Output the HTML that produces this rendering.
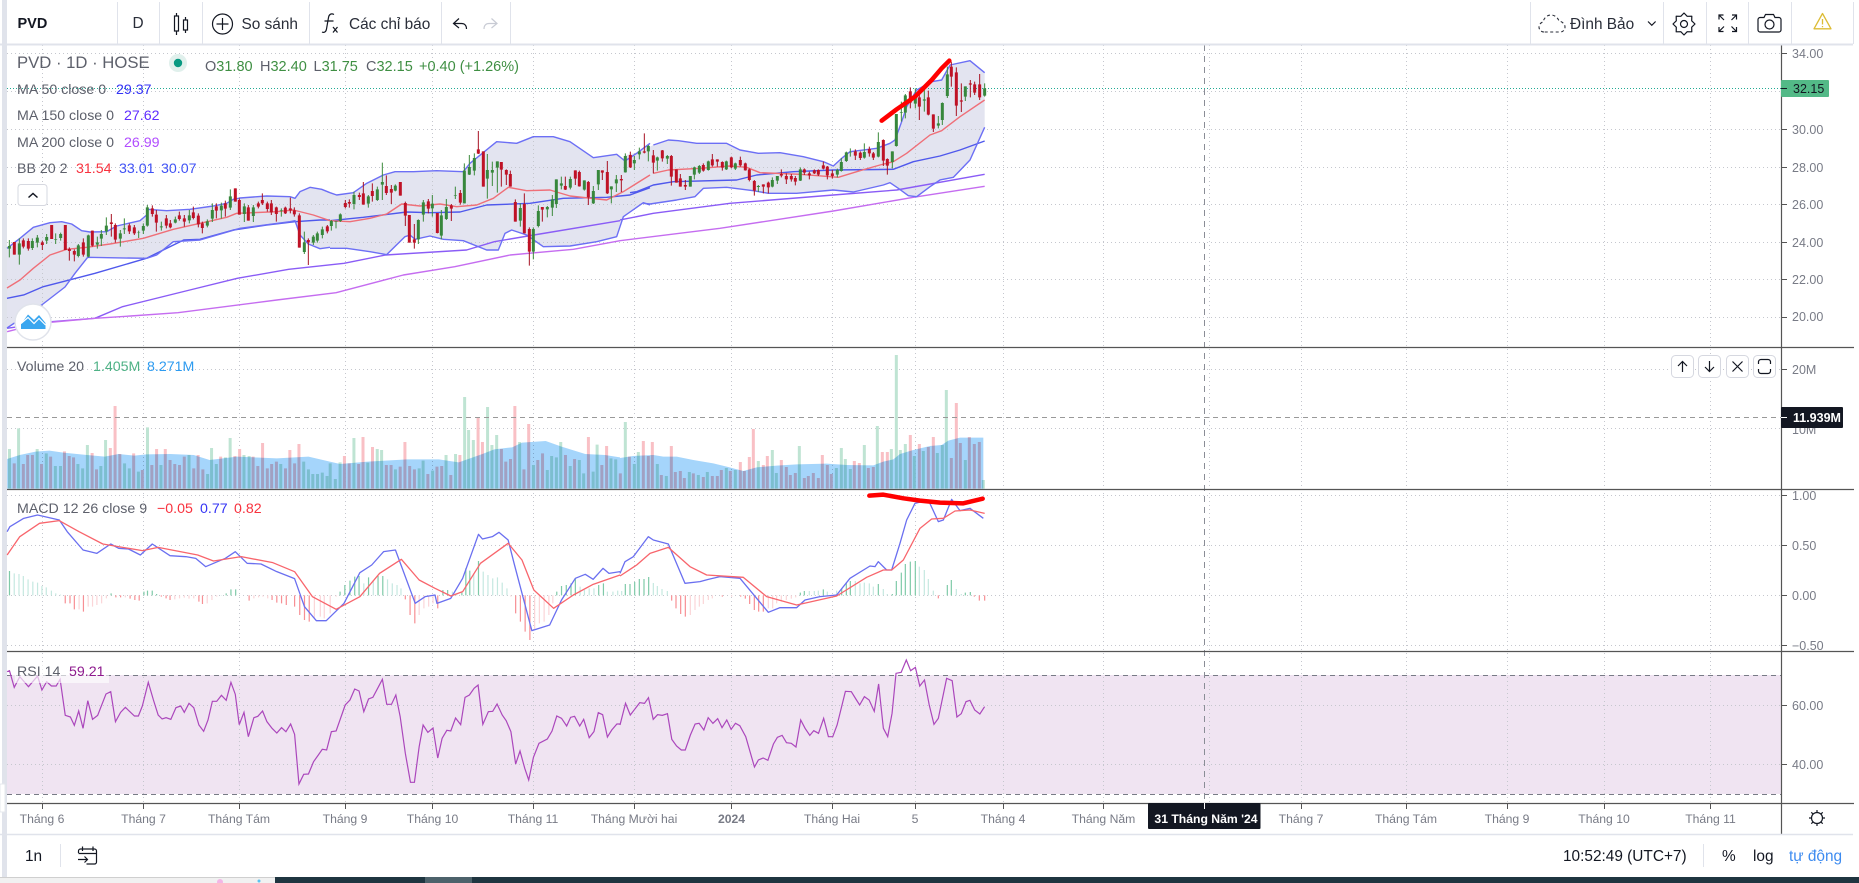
<!DOCTYPE html>
<html lang="vi"><head><meta charset="utf-8"><title>PVD</title>
<style>
html,body{margin:0;padding:0;background:#fff;width:1859px;height:883px;overflow:hidden}
svg{display:block}
svg *{vector-effect:non-scaling-stroke}
text{font-family:"Liberation Sans",sans-serif}
.n{fill:none}
.ax{font-size:12.5px;fill:#787b86}
.tm{font-size:12.2px;fill:#787b86;text-anchor:middle}
.lg{font-size:14.2px;fill:#5d606b}
.tb{font-size:15.4px;fill:#2a2e39}
.ic{fill:none;stroke:#131722;stroke-width:1.2}
.gw{fill:none;stroke:#3c8a3c;stroke-width:1}
.gb{fill:none;stroke:#37873c;stroke-width:3}
.rw{fill:none;stroke:#a81224;stroke-width:1}
.rb{fill:none;stroke:#bf1226;stroke-width:3}
.sh{fill:#e3e4f0;stroke:none}
.bd{fill:none;stroke:#6c6ff5;stroke-width:1.4;stroke-linejoin:round}
.mid{fill:none;stroke:#ef6f78;stroke-width:1.4;stroke-linejoin:round}
.m50{fill:none;stroke:#4f58ec;stroke-width:1.4;stroke-linejoin:round}
.m150{fill:none;stroke:#8a5cf6;stroke-width:1.4;stroke-linejoin:round}
.m200{fill:none;stroke:#c56df0;stroke-width:1.4;stroke-linejoin:round}
.btn{fill:#fff;stroke:#d6d8e0;stroke-width:1}
</style></head><body>
<svg width="1859" height="883" viewBox="0 0 1859 883" xmlns="http://www.w3.org/2000/svg">
<rect width="1859" height="883" fill="#fff"/>
<rect x="2" y="0" width="5" height="877" fill="#e0e3eb"/>

<!-- RSI band -->
<rect x="7" y="675" width="1774" height="119" fill="#f0e4f2"/>

<!-- Bollinger fill -->
<g transform="translate(0 170) scale(.33333)">
<polygon class="sh" points="21,235 60,205 100,172 150,158 185,155 215,162 245,182 270,186 320,185 350,168 385,160 420,152 440,135 442,118 500,122 570,118 640,108 680,100 700,88 720,84 800,78 870,80 885,85 900,65 930,52 965,58 990,68 990,232 960,236 925,222 900,195 885,152 870,155 720,175 600,210 520,215 470,255 440,265 263,262 225,310 195,351 125,405 21,474"/>
</g>
<g transform="translate(330 120) scale(.33333)">
<polygon class="sh" points="0,218 20,225 70,218 110,190 160,165 195,155 250,155 320,152 400,155 420,130 500,65 560,70 610,50 670,50 720,65 790,113 860,103 885,123 920,100 960,70 960,255 940,248 880,290 860,350 800,365 720,378 640,380 590,345 545,330 525,340 505,390 470,390 400,362 340,358 300,348 255,358 240,345 225,350 170,404 120,395 50,385 0,385"/>
</g>
<g transform="translate(620 40) scale(.33333)">
<polygon class="sh" points="0,363 20,345 60,335 100,315 145,300 175,302 230,310 320,310 360,330 415,340 480,338 550,350 610,365 640,378 665,355 690,335 770,325 810,310 825,300 845,245 860,200 890,150 935,125 965,120 990,75 1050,62 1094,98 1094,262 1050,360 1000,412 960,420 930,440 890,470 865,467 835,445 810,428 790,435 700,456 640,450 530,460 445,460 400,452 320,442 250,445 225,470 170,480 90,492 70,490 30,505 0,550"/>
</g>

<!-- grid -->
<path fill="none" stroke="#c5c7ce" stroke-width="1" stroke-dasharray="1 3" d="M42.5 45V803M143.5 45V803M239.5 45V803M345.5 45V803M432.5 45V803M533.5 45V803M634.5 45V803M731.5 45V803M832.5 45V803M915.5 45V803M1003.5 45V803M1103.5 45V803M1209.5 45V803M1301.5 45V803M1406.5 45V803M1507.5 45V803M1604.5 45V803M1710.5 45V803"/>
<path fill="none" stroke="#c5c7ce" stroke-width="1" stroke-dasharray="1 3" d="M7 53.5H1781M7 91.5H1781M7 129.5H1781M7 167.5H1781M7 204.5H1781M7 242.5H1781M7 279.5H1781M7 317.5H1781M7 369.5H1781M7 428.5H1781M7 495.5H1781M7 545.5H1781M7 595.5H1781M7 645.5H1781M7 705.5H1781M7 764.5H1781"/>

<!-- price line -->
<path d="M7 88.5H1781" stroke="#22ab94" stroke-width="1" stroke-dasharray="1 2" fill="none"/>

<!-- MAs -->
<g transform="translate(0 130) scale(.39544 .33333)">
<polyline class="m150" points="18,595 130,575 240,565 310,530 480,480 600,445 730,418 870,400 975,375 1180,360 1250,335 1350,315 1568,272"/>
<polyline class="m200" points="18,605 100,580 240,565 330,558 450,548 700,510 850,488 1020,435 1150,410 1290,375 1450,358 1568,332"/>
</g>
<g transform="translate(0 170) scale(.33333)">
<polyline class="m50" points="21,385 71,375 130,350 200,332 285,310 439,265 551,210 600,208 700,180 800,165 885,155 960,150 990,150"/>
</g>
<g transform="translate(330 120) scale(.33333)">
<polyline class="m50" points="0,302 100,292 230,276 300,278 390,276 470,255 600,250 700,235 830,232 900,225 960,203"/>
</g>
<g transform="translate(620 40) scale(.33333)">
<polyline class="m150" points="0,540 100,520 330,490 640,465 830,450 1094,403"/>
<polyline class="m200" points="0,602 300,565 640,513 880,472 1094,439"/>
<polyline class="m50" points="30,458 50,455 100,435 160,425 350,420 410,405 520,395 640,390 820,388 880,365 960,348 1020,330 1094,303"/>
</g>

<!-- bands + candles left -->
<g transform="translate(0 170) scale(.33333)">
<polyline class="bd" points="21,235 60,205 100,172 150,158 185,155 215,162 245,182 270,186 320,185 350,168 385,160 420,152 440,135 442,118 500,122 570,118 640,108 680,100 700,88 720,84 800,78 870,80 885,85 900,65 930,52 965,58 990,68"/>
<polyline class="bd" points="21,474 125,405 195,351 225,310 263,262 440,265 470,255 520,215 600,210 720,175 870,155 885,152 900,195 925,222 960,236 990,232"/>
<polyline class="mid" points="21,354 60,330 100,295 150,255 200,238 260,232 330,222 430,205 520,178 600,160 680,142 710,130 760,128 830,125 880,120 940,135 990,152"/>
<path class="gw" d="M28 210V262M58 205V284M97 205V240M112 195V232M140 192V222M167 190V222M182 188V212M235 222V262M265 194V262M292 200V236M304 180V228M319 142V195M361 180V230M373 145V192M416 182V204M430 160V192M442 105V170M484 155V182M526 140V160M568 120V160M622 148V172M637 100V156M664 98V146M691 58V120M733 100V156M760 105V156M844 115V140M913 185V252M940 195V225M952 185V218M967 170V205"/>
<path class="gb" d="M28 228V236M58 220V254M97 213V234M112 203V218M140 201V212M167 207V209M182 192V204M235 226V258M265 196V260M292 217V224M304 192V206M319 167V184M361 190V206M373 175V178M416 188V189M430 168V182M442 112V167M484 169V172M526 148V158M568 136V151M622 154V167M637 120V146M664 107V121M691 79V113M733 109V132M760 112V138M844 121V123M913 217V246M940 200V218M952 190V212M967 178V195"/>
<path class="rw" d="M43 216V254M70 205V235M85 205V242M127 212V240M155 165V207M196 165V240M208 232V272M223 238V274M250 205V260M277 182V230M334 132V200M346 160V218M388 160V192M403 165V195M457 106V140M469 120V185M499 135V175M511 150V175M538 125V152M553 135V170M580 110V148M595 130V172M607 155V190M649 100V145M676 92V140M706 55V95M718 85V134M745 105V152M775 95V115M787 70V105M802 95V125M814 90V135M829 110V155M856 110V132M871 83V130M883 112V140M898 130V233M925 205V285M982 165V190"/>
<path class="rb" d="M43 216V254M70 211V230M85 213V236M127 217V225M155 165V207M196 165V240M208 237V243M223 243V254M250 217V254M277 182V227M334 157V162M346 165V209M388 166V184M403 172V190M457 115V132M469 134V158M499 145V167M511 160V172M538 136V147M553 145V155M580 127V144M595 137V163M607 160V174M649 109V122M676 100V116M706 55V95M718 90V134M745 112V152M775 100V110M787 90V100M802 100V117M814 100V127M829 112V132M856 113V130M871 115V121M883 121V133M898 136V233M925 210V217M982 169V184"/>
</g>

<!-- bands + candles middle -->
<g transform="translate(330 120) scale(.33333)">
<polyline class="bd" points="0,218 20,225 70,218 110,190 160,165 195,155 250,155 320,152 400,155 420,130 500,65 560,70 610,50 670,50 720,65 790,113 860,103 885,123 920,100 960,70"/>
<polyline class="bd" points="0,385 50,385 120,395 170,404 225,350 240,345 255,358 300,348 340,358 400,362 470,390 505,390 525,340 545,330 590,345 640,380 720,378 800,365 860,350 880,290 940,248 960,255"/>
<polyline class="mid" points="0,302 60,305 120,295 170,282 215,252 270,258 330,252 380,260 440,255 490,235 535,202 590,212 660,210 720,228 830,240 880,215 960,165"/>
<path class="gw" d="M4 300V332M18 304V325M31 280V306M72 215V268M115 225V263M142 200V243M157 128V240M196 193V214M265 298V372M280 240V305M307 225V290M334 270V358M349 237V300M376 200V237M403 130V250M418 105V165M433 100V166M472 102V236M487 125V198M502 124V218M571 250V320M610 322V418M625 256V322M652 258V292M667 225V288M679 178V264M694 170V208M721 170V208M763 181V212M790 198V252M805 150V210M844 199V250M859 165V216M886 100V158M913 108V150M928 83V118M955 75V124"/>
<path class="gb" d="M4 303V318M18 304V306M31 283V303M72 225V252M115 229V251M142 208V240M157 186V194M196 197V212M265 300V358M280 247V284M307 251V265M334 286V347M349 261V297M376 225V227M403 152V250M418 141V164M433 114V152M472 150V176M487 150V158M502 124V143M571 264V302M610 327V395M625 273V318M652 261V268M667 238V263M679 178V252M694 190V197M721 177V203M763 181V209M790 213V250M805 150V193M844 199V208M859 178V190M886 108V157M913 120V130M928 94V103M955 78V94"/>
<path class="rw" d="M46 240V265M58 238V263M88 218V240M100 186V254M127 190V245M169 166V225M184 195V252M211 186V227M226 245V318M238 285V368M253 312V386M295 237V280M322 279V340M364 252V303M391 210V254M445 33V102M460 94V200M514 126V200M529 148V195M541 152V200M556 238V305M583 220V340M598 322V437M637 261V305M706 170V210M736 151V195M748 152V200M775 183V255M817 151V180M832 123V222M874 165V216M901 95V144M943 40V100"/>
<path class="rb" d="M46 249V261M58 246V251M88 225V231M100 220V254M127 213V228M169 198V219M184 207V218M211 186V227M226 249V287M238 285V368M253 358V368M295 244V266M322 279V339M364 256V266M391 219V248M445 88V101M460 94V200M514 126V149M529 150V164M541 162V200M556 246V305M583 252V340M598 327V395M637 261V269M706 198V209M736 151V176M748 156V199M775 186V232M817 151V158M832 156V220M874 177V181M901 105V142M943 94V98"/>
</g>

<!-- bands + candles right -->
<g transform="translate(620 40) scale(.33333)">
<polyline class="bd" points="100,315 145,300 175,302 230,310 320,310 360,330 415,340 480,338 550,350 610,365 640,378 665,355 690,335 770,325 810,310 825,300 845,245 860,200 890,150 935,125 965,120 990,75 1050,62 1094,98"/>
<polyline class="bd" points="70,490 90,492 170,480 225,470 250,445 320,442 400,452 445,460 530,460 640,450 700,456 790,435 810,428 835,445 865,467 890,470 930,440 960,420 1000,412 1050,360 1094,262"/>
<polyline class="mid" points="100,400 145,390 240,385 330,378 380,382 420,398 540,403 655,412 720,392 780,375 820,365 860,340 930,285 965,272 1020,230 1094,180"/>
<path class="gw" d="M112 350V392M142 345V372M211 408V440M223 380V418M238 375V402M265 362V392M319 362V390M346 368V390M415 435V456M457 412V442M472 408V432M541 382V423M652 386V412M664 354V395M679 335V366M691 325V350M733 310V356M775 277V352M817 334V385M829 222V320M844 185V245M856 162V235M886 145V205M913 145V215M955 228V265M967 187V255M982 80V174M1036 139V183M1094 130V170"/>
<path class="gb" d="M112 352V362M142 348V356M211 408V440M223 382V404M238 378V398M265 364V390M319 364V388M346 370V386M415 438V441M457 420V440M472 408V422M541 388V422M652 390V404M664 366V393M679 337V363M691 337V338M733 336V353M775 306V350M817 334V366M829 222V318M844 216V218M856 166V218M886 170V191M913 178V182M955 250V257M967 189V240M982 103V168M1036 139V170M1094 145V167"/>
<path class="rw" d="M100 330V400M127 330V365M154 345V437M169 388V428M181 402V440M196 420V450M250 370V395M277 342V380M292 358V380M307 364V392M334 350V385M361 350V380M376 368V392M388 385V424M403 420V467M430 433V460M445 425V460M484 388V412M499 400V432M514 402V425M526 408V436M553 385V405M568 395V418M583 388V402M595 388V408M610 365V388M622 378V418M637 390V416M706 328V360M721 334V360M748 320V350M760 336V360M790 298V378M802 355V404M871 142V205M898 160V240M925 152V226M940 223V276M994 65V140M1009 82V228M1024 130V216M1051 120V172M1064 125V165M1079 102V180"/>
<path class="rb" d="M100 346V368M127 331V355M154 348V410M169 388V428M181 415V440M196 435V440M250 375V392M277 358V376M292 358V365M307 366V383M334 352V382M361 360V376M376 370V391M388 388V420M403 423V452M430 433V440M445 428V442M484 402V407M499 408V418M514 408V418M526 414V425M553 388V398M568 400V406M583 391V400M595 390V404M610 376V386M622 380V406M637 400V408M706 334V347M721 338V354M748 327V340M760 340V353M790 300V362M802 357V377M871 154V188M898 172V200M925 172V224M940 223V266M994 80V110M1009 97V197M1024 181V185M1051 130V134M1064 133V158M1079 133V172"/>
<polyline fill="none" stroke="#f00" stroke-width="4.5" stroke-linecap="round" stroke-linejoin="round" points="785,242 830,208 885,170 935,120 965,85 988,62"/>
</g>

<!-- Volume bars left -->
<g transform="translate(0 340) scale(.39544 .33333)">
<path fill="none" stroke="#bfe4d3" stroke-width="3" d="M24 446V327M47 446V265M94 446V327M117 446V340M140 446V378M153 446V378M197 446V372M209 446V385M221 446V315M255 446V378M267 446V300M315 446V370M327 446V385M350 446V395M373 446V262M407 446V375M478 446V345M525 446V402M535 446V324M547 446V372M570 446V352M582 446V294M617 446V345M630 446V348M710 446V372M768 446V365M780 446V388M791 446V402M803 446V402M815 446V398M827 446V408M835 446V370M848 446V417M860 446V367M895 446V294M930 446V368M954 446V327M965 446V330M1000 446V388M1060 446V385M1070 446V362M1094 446V392M1128 446V345M1152 446V342M1175 446V171M1185 446V270M1197 446V300M1233 446V201M1244 446V315M1256 446V285M1314 446V306M1349 446V375M1384 446V390M1395 446V348M1407 446V352M1418 446V306M1442 446V378M1465 446V360M1476 446V400M1500 446V395M1510 446V314M1545 446V355M1557 446V358"/>
<path fill="none" stroke="#f9c0c5" stroke-width="3" d="M36 446V370M59 446V372M70 446V345M82 446V345M105 446V372M128 446V350M163 446V334M175 446V348M186 446V352M233 446V339M244 446V388M279 446V324M291 446V198M303 446V342M338 446V340M360 446V390M384 446V375M396 446V327M418 446V327M430 446V360M442 446V372M454 446V375M466 446V350M490 446V385M501 446V345M513 446V388M558 446V350M594 446V348M606 446V327M640 446V350M652 446V378M664 446V309M676 446V385M687 446V372M699 446V365M722 446V385M733 446V330M745 446V370M756 446V312M871 446V348M883 446V370M907 446V372M918 446V291M942 446V321M977 446V375M989 446V375M1012 446V380M1024 446V306M1036 446V378M1048 446V388M1082 446V402M1105 446V380M1117 446V378M1140 446V405M1163 446V345M1209 446V232M1220 446V306M1268 446V327M1279 446V365M1291 446V357M1302 446V198M1325 446V388M1337 446V252M1360 446V360M1372 446V340M1430 446V345M1453 446V357M1488 446V291M1522 446V375M1534 446V318"/>
</g>
<g transform="translate(620 340) scale(.33333)">
<path fill="none" stroke="#bfe4d3" stroke-width="3" d="M16 446V246M43 446V372M55 446V336M112 446V372M139 446V408M208 446V396M235 446V405M262 446V396M319 446V384M346 446V390M415 446V363M457 446V330M469 446V399M538 446V318M649 446V384M664 446V324M676 446V357M691 446V387M733 446V315M772 446V258M814 446V327M829 446V45M841 446V330M856 446V312M883 446V348M910 446V333M952 446V339M967 446V315M979 446V150M1036 446V360M1090 446V420"/>
<path fill="none" stroke="#f9c0c5" stroke-width="3" d="M1 446V400M28 446V350M70 446V303M85 446V348M97 446V306M124 446V405M154 446V318M166 446V396M181 446V393M193 446V414M220 446V400M250 446V411M277 446V408M292 446V408M304 446V390M331 446V393M361 446V366M373 446V393M388 446V351M400 446V267M430 446V375M442 446V348M484 446V360M499 446V381M511 446V405M526 446V399M553 446V414M565 446V408M580 446V399M595 446V414M607 446V345M622 446V375M634 446V402M703 446V363M718 446V369M745 446V384M760 446V381M787 446V336M802 446V336M871 446V285M898 446V312M925 446V321M940 446V291M994 446V354M1009 446V189M1021 446V309M1048 446V291M1063 446V312M1078 446V306"/>
</g>
<!-- Volume MA area -->
<g style="mix-blend-mode:multiply">
<g transform="translate(0 340) scale(.39544 .33333)">
<polygon fill="#a5d5fb" stroke="none" points="18,357 50,345 90,335 125,332 160,338 220,345 265,350 300,342 340,347 370,343 430,342 490,345 530,360 600,350 700,355 780,350 860,372 930,365 1030,358 1110,358 1160,367 1220,342 1250,328 1295,322 1320,308 1380,303 1420,320 1480,342 1530,345 1568,352 1568,446 18,446"/>
</g>
<g transform="translate(620 340) scale(.33333)">
<polygon fill="#a5d5fb" stroke="none" points="0,354 40,348 100,345 130,350 170,350 220,360 280,370 320,380 370,393 410,382 470,377 530,373 620,371 680,375 760,376 790,365 820,358 840,342 880,330 930,318 965,315 985,302 1020,293 1090,293 1090,446 0,446"/>
</g>
</g>
<path d="M7 417.5H1781" fill="none" stroke="#999" stroke-width="1" stroke-dasharray="5 4"/>

<!-- MACD left -->
<g transform="translate(0 340) scale(.39544 .33333)">
<path fill="none" stroke="#7fcaa8" stroke-width="1.2" d="M24 766V693M281 766V760M364 766V755M373 766V752M385 766V752M396 766V762M572 766V760M584 766V748M596 766V748M860 766V755M872 766V735M885 766V722M897 766V710M908 766V708M932 766V712M956 766V708M968 766V708M1120 766V750M1132 766V750M1168 766V758M1178 766V685M1188 766V692M1210 766V663M1408 766V755M1420 766V738M1432 766V735M1444 766V730M1455 766V715M1514 766V735M1526 766V730"/>
<path fill="none" stroke="#c5e8e0" stroke-width="1.2" d="M36 766V700M48 766V702M59 766V708M71 766V718M83 766V725M95 766V728M106 766V738M117 766V742M130 766V752M141 766V760M153 766V764M560 766V765M920 766V730M944 766V720M980 766V718M992 766V730M1004 766V735M1014 766V745M1144 766V755M1155 766V762M1198 766V700M1222 766V695M1234 766V705M1246 766V715M1258 766V712M1270 766V728M1282 766V745M1467 766V740M1478 766V750M1490 766V745M1502 766V745M1536 766V755M1550 766V755M1562 766V752"/>
<path fill="none" stroke="#f78f94" stroke-width="1.2" d="M165 766V790M177 766V790M188 766V808M211 766V815M293 766V772M305 766V772M329 766V776M341 766V780M352 766V782M408 766V770M420 766V775M430 766V780M503 766V785M512 766V792M630 766V782M688 766V780M700 766V788M712 766V790M724 766V795M745 766V800M758 766V825M770 766V840M782 766V845M1025 766V778M1037 766V825M1049 766V850M1107 766V805M1304 766V820M1316 766V845M1328 766V875M1340 766V900"/>
<path fill="none" stroke="#fbd5d8" stroke-width="1.2" d="M200 766V808M223 766V800M234 766V800M245 766V795M257 766V790M269 766V775M317 766V772M442 766V778M454 766V775M466 766V773M478 766V776M490 766V775M524 766V790M536 766V780M548 766V770M642 766V775M654 766V772M665 766V770M677 766V775M795 766V835M810 766V830M820 766V835M835 766V820M850 766V770M1060 766V825M1072 766V805M1084 766V800M1095 766V790M1292 766V770M1352 766V870M1364 766V850M1376 766V845M1388 766V825M1398 766V790"/>
<polyline fill="none" stroke="#6a6ff0" stroke-width="1.3" stroke-linejoin="round" points="18,575 25,560 60,535 95,525 150,540 170,575 210,630 245,640 280,612 300,625 325,627 355,645 385,612 430,647 470,650 495,655 520,680 570,655 595,635 625,670 660,672 700,695 745,716 770,800 800,842 825,842 870,790 910,698 940,675 970,635 1000,630 1050,790 1075,770 1100,765 1105,790 1140,775 1170,715 1210,583 1220,597 1245,590 1262,577 1285,600 1300,670 1345,872 1390,855 1420,780 1455,715 1480,703 1500,718 1525,685 1540,700 1568,695"/>
<polyline fill="none" stroke="#f8656c" stroke-width="1.3" stroke-linejoin="round" points="18,645 50,590 100,550 150,542 200,575 260,612 360,632 400,622 500,645 540,663 610,650 690,668 745,695 790,770 850,808 910,770 960,700 1015,658 1060,720 1100,745 1140,768 1170,755 1215,670 1285,610 1320,660 1350,750 1400,805 1450,765 1500,733 1568,705"/>
</g>
<!-- MACD right -->
<g transform="translate(620 340) scale(.33333)">
<path fill="none" stroke="#7fcaa8" stroke-width="1.2" d="M16 766V732M30 766V732M44 766V726M58 766V717M72 766V717M86 766V711M541 766V758M553 766V753M610 766V748M665 766V745M679 766V728M691 766V723M775 766V732M817 766V762M829 766V723M844 766V698M856 766V672M871 766V665M886 766V663M982 766V735M994 766V720M1036 766V758M1051 766V756"/>
<path fill="none" stroke="#c5e8e0" stroke-width="1.2" d="M5 766V753M100 766V729M112 766V738M126 766V747M142 766V753M568 766V753M583 766V753M595 766V752M622 766V755M650 766V752M706 766V723M720 766V730M733 766V728M748 766V730M760 766V740M790 766V747M802 766V762M898 766V680M913 766V690M925 766V717M940 766V752M1009 766V747M1024 766V762"/>
<path fill="none" stroke="#f78f94" stroke-width="1.2" d="M155 766V782M168 766V805M182 766V822M196 766V830M307 766V770M362 766V770M376 766V776M389 766V792M403 766V810M416 766V815M430 766V815M955 766V775M1063 766V770M1078 766V782M1094 766V782"/>
<path fill="none" stroke="#fbd5d8" stroke-width="1.2" d="M211 766V825M225 766V810M238 766V800M250 766V792M265 766V780M277 766V775M335 766V770M445 766V805M458 766V805M470 766V790M484 766V785M499 766V780M514 766V776M527 766V772"/>
<polyline fill="none" stroke="#6a6ff0" stroke-width="1.3" stroke-linejoin="round" points="0,700 15,665 40,650 85,590 100,600 145,612 195,730 240,725 265,718 300,710 360,715 385,745 445,817 480,803 530,803 555,780 600,770 650,765 690,715 750,678 765,680 775,665 800,690 815,690 840,610 860,540 885,490 925,480 955,545 970,540 995,478 1020,512 1050,505 1090,535"/>
<polyline fill="none" stroke="#f8656c" stroke-width="1.3" stroke-linejoin="round" points="0,708 50,675 90,640 145,622 210,680 260,705 370,712 440,770 530,795 650,768 740,712 790,690 815,690 850,660 900,565 935,537 970,535 1005,513 1050,510 1094,520"/>
<polyline fill="none" stroke="#f00" stroke-width="4.5" stroke-linecap="round" stroke-linejoin="round" points="748,467 790,464 850,475 900,482 960,488 1030,490 1088,476"/>
</g>

<!-- RSI -->
<path d="M7 675.5H1781M7 794.5H1781" fill="none" stroke="#787b86" stroke-width="1" stroke-dasharray="5 4"/>
<g transform="translate(0 640) scale(.39544 .33333)">
<polyline fill="none" stroke="#ab47bc" stroke-width="1.2" points="18,95 24,92 36,142 50,110 72,140 95,108 106,150 118,125 130,138 142,138 152,118 165,226 178,231 188,256 199,213 210,265 222,182 234,238 247,226 268,162 280,155 292,245 305,217 317,202 340,228 350,228 360,198 375,127 388,180 400,225 410,237 420,233 432,238 445,203 457,198 466,217 478,190 490,203 503,255 515,274 526,240 537,184 548,184 560,166 572,181 584,127 595,163 605,254 617,217 628,290 642,233 652,229 664,213 675,245 688,265 700,279 712,263 723,275 735,252 745,283 756,432 768,403 780,402 793,365 805,345 815,328 826,330 838,275 850,273 873,195 885,180 897,147 908,153 920,215 932,177 943,172 967,118 978,193 990,193 1001,165 1012,230 1025,340 1038,427 1048,427 1060,320 1070,255 1082,277 1095,264 1107,354 1118,295 1130,271 1140,273 1152,234 1165,254 1176,172 1187,165 1199,145 1209,135 1221,253 1235,215 1246,214 1257,192 1270,225 1280,242 1292,275 1304,372 1315,333 1327,385 1337,420 1349,352 1363,310 1384,297 1396,273 1408,228 1420,235 1433,258 1443,232 1453,229 1466,258 1476,238 1490,293 1502,275 1513,218 1524,224 1536,291 1547,270 1560,252 1568,252"/>
</g>
<g transform="translate(620 640) scale(.39544 .33333)">
<polyline fill="none" stroke="#ab47bc" stroke-width="1.2" points="0,255 14,190 26,225 50,188 62,190 72,173 84,238 95,224 107,226 120,221 131,298 143,318 155,330 165,330 178,285 190,252 200,250 212,270 223,233 235,250 247,236 258,263 270,240 281,268 292,250 303,257 318,290 340,381 350,360 362,354 374,361 388,312 398,292 410,286 421,308 433,310 445,321 457,240 468,265 480,286 490,272 502,280 515,235 527,290 538,290 549,255 570,154 585,155 598,180 606,195 618,170 630,180 643,214 654,132 666,265 677,290 688,220 698,100 711,97 724,60 735,92 747,82 758,138 770,120 782,195 794,253 805,235 826,115 840,122 852,231 863,221 875,185 885,181 897,210 910,222 922,200"/>
</g>
<rect x="15" y="664" width="94" height="19" fill="#fff" opacity=".62"/>

<!-- crosshair -->
<path d="M1204.5 45V803" fill="none" stroke="#8a8d96" stroke-width="1" stroke-dasharray="6 5"/>

<!-- separators -->
<path d="M7 347.5H1854M7 489.5H1854M7 651.5H1854M7 803.5H1854" fill="none" stroke="#555" stroke-width="1.2"/>
<path d="M1781.5 45V834" fill="none" stroke="#555" stroke-width="1.2"/>
<path d="M1781 53.5h6M1781 91.5h6M1781 129.5h6M1781 167.5h6M1781 204.5h6M1781 242.5h6M1781 279.5h6M1781 317.5h6M1781 369.5h6M1781 495.5h6M1781 545.5h6M1781 595.5h6M1781 645.5h6M1781 705.5h6M1781 764.5h6M42.5 803v6M143.5 803v6M239.5 803v6M345.5 803v6M432.5 803v6M533.5 803v6M634.5 803v6M731.5 803v6M832.5 803v6M915.5 803v6M1003.5 803v6M1103.5 803v6M1301.5 803v6M1406.5 803v6M1507.5 803v6M1604.5 803v6M1710.5 803v6" fill="none" stroke="#555" stroke-width="1"/>

<!-- top toolbar -->
<path d="M0 44.5H1853" stroke="#e0e3eb" stroke-width="2" fill="none"/>
<path d="M117.5 2V44M159.5 2V44M202.5 2V44M309.5 2V44M441.5 2V44M510.5 2V44M1530.5 2V44M1663.5 2V44M1706.5 2V44M1748.5 2V44M1791.5 2V44M1853.5 2V44" stroke="#e0e3eb" stroke-width="1" fill="none"/>
<text x="17.500" y="28" font-size="14.500" font-weight="700" fill="#131722">PVD</text>
<text x="138" y="28" class="tb" text-anchor="middle">D</text>
<path class="ic" d="M176.500 13V16M176.500 31V35M185.500 17V20M185.500 30V33"/>
<rect class="ic" x="174.500" y="16" width="4" height="15"/>
<rect class="ic" x="183.500" y="20" width="4" height="10"/>
<circle class="ic" cx="222.500" cy="24" r="10"/>
<path class="ic" d="M222.500 18V30M216.500 24H228.500"/>
<text x="241.500" y="29" class="tb">So sánh</text>
<path class="ic" d="M334 14.500c-3-1.500-5 0-5.500 3L326.500 29c-.5 3-2.500 4-4.500 3M324.500 21H333.500M333 27l4.500 5.500M337.500 27l-4.500 5.500"/>
<text x="349" y="29" class="tb">Các chỉ báo</text>
<path class="ic" d="M459 18.500L453.500 23.500L459 28M453.500 23.500H461.500c3 0 5 2 5 5.500"/>
<path class="ic" style="stroke:#c8cbd4" d="M491.500 18.500L497 23.500L491.500 28M497 23.500H489c-3 0-5 2-5 5.500"/>
<path fill="none" stroke="#2a2e39" stroke-width="1.100" stroke-dasharray="3 2.500" d="M1544 32c-3 0-5-2.500-5-5c0-2.500 2-4.500 4-5c1-4 4-7 8-7c4 0 7 3 8 6c3 .5 6 3 6 6c0 3-2 5-5 5z"/>
<text x="1570" y="29" class="tb">Đình Bảo</text>
<path class="ic" d="M1648 21.500l3.800 3.800l3.800-3.800"/>
<polygon class="ic" stroke-linejoin="round" points="1695,24 1691.700,27.200 1691.800,31.800 1687.200,31.700 1684,35 1680.800,31.700 1676.200,31.800 1676.300,27.200 1673,24 1676.300,20.800 1676.200,16.200 1680.800,16.300 1684,13 1687.200,16.300 1691.800,16.200 1691.700,20.800"/>
<circle class="ic" cx="1684" cy="24" r="3.500"/>
<path class="ic" d="M1719 19.500V15H1723.500M1719.500 15.500L1724 20M1736.500 19.500V15H1732M1736 15.500L1731.500 20M1719 27V31.500H1723.500M1719.500 31L1724 26.500M1736.500 27V31.500H1732M1736 31L1731.500 26.500"/>
<path class="ic" d="M1760 17.500H1764L1765.500 14.500H1773.500L1775 17.500H1779c1 0 2 1 2 2V30c0 1-1 2-2 2H1760c-1 0-2-1-2-2V19.500c0-1 1-2 2-2z"/>
<circle class="ic" cx="1769.500" cy="24.500" r="4.500"/>
<path fill="none" stroke="#dcbc35" stroke-width="1.300" stroke-linejoin="round" d="M1822.500 13.500L1831 28.800H1814ZM1822.500 19V24.500M1822.500 26V27.300"/>

<!-- legend -->
<text x="17" y="68" font-size="16.700" fill="#5d606b">PVD · 1D · HOSE</text>
<circle cx="178" cy="63" r="9" fill="#e0f0ec"/><circle cx="178" cy="63" r="4.200" fill="#089981"/>
<g font-size="14.500" fill="#3f8f43">
<text x="205" y="71"><tspan fill="#5d606b">O</tspan>31.80</text>
<text x="260" y="71"><tspan fill="#5d606b">H</tspan>32.40</text>
<text x="313.500" y="71"><tspan fill="#5d606b">L</tspan>31.75</text>
<text x="366" y="71"><tspan fill="#5d606b">C</tspan>32.15</text>
<text x="419" y="71">+0.40 (+1.26%)</text>
</g>
<text x="17" y="94" class="lg">MA 50 close 0</text><text x="116" y="94" font-size="14.200" fill="#3434f5">29.37</text>
<text x="17" y="120" class="lg">MA 150 close 0</text><text x="124" y="120" font-size="14.200" fill="#5f2dff">27.62</text>
<text x="17" y="147" class="lg">MA 200 close 0</text><text x="124" y="147" font-size="14.200" fill="#b14dff">26.99</text>
<text x="17" y="173" class="lg">BB 20 2</text><text x="76" y="173" font-size="14.200" fill="#f8323e">31.54</text><text x="119" y="173" font-size="14.200" fill="#3f51f5">33.01</text><text x="161" y="173" font-size="14.200" fill="#3f51f5">30.07</text>
<rect x="18" y="184.500" width="29" height="21" rx="3" fill="#fff" stroke="#d6d8e0"/>
<path d="M28.500 197.500l4.500-4l4.500 4" fill="none" stroke="#131722" stroke-width="1.500"/>
<text x="17" y="371" class="lg">Volume 20</text><text x="93" y="371" font-size="14.200" fill="#4fb286">1.405M</text><text x="147" y="371" font-size="14.200" fill="#2e9bf0">8.271M</text>
<text x="17" y="513" class="lg">MACD 12 26 close 9</text><text x="157" y="513" font-size="14.200" fill="#f8323e">−0.05</text><text x="200" y="513" font-size="14.200" fill="#3434f5">0.77</text><text x="234" y="513" font-size="14.200" fill="#f8323e">0.82</text>
<text x="17" y="676" class="lg">RSI 14</text><text x="69" y="676" font-size="14.200" fill="#8e1a8e">59.21</text>

<!-- logo -->
<circle cx="33" cy="322" r="18" fill="#fff" stroke="#e0e3eb" stroke-width="1.500"/>
<path d="M21 329V324L28 314.500L34 320L39 315L45.500 323V329Z" fill="#3aa6ef"/>
<path d="M21 323.500L28 317.500L34 323.500L39 318.500L45.500 325" fill="none" stroke="#fff" stroke-width="1.200"/>

<!-- axis labels -->
<g class="ax">
<text x="1792" y="58" class="ax">34.00</text>
<text x="1792" y="134" class="ax">30.00</text>
<text x="1792" y="172" class="ax">28.00</text>
<text x="1792" y="209" class="ax">26.00</text>
<text x="1792" y="247" class="ax">24.00</text>
<text x="1792" y="284" class="ax">22.00</text>
<text x="1792" y="321" class="ax">20.00</text>
<text x="1792" y="374" class="ax">20M</text>
<text x="1792" y="434" class="ax">10M</text>
<text x="1792" y="500" class="ax">1.00</text>
<text x="1792" y="550" class="ax">0.50</text>
<text x="1792" y="600" class="ax">0.00</text>
<text x="1792" y="650" class="ax">−0.50</text>
<text x="1792" y="710" class="ax">60.00</text>
<text x="1792" y="769" class="ax">40.00</text>
</g>
<rect x="1781" y="80" width="48" height="17" rx="1" fill="#53b987"/>
<path d="M1781 88.500h6" stroke="#131722" fill="none"/>
<text x="1793" y="93" font-size="12.500" fill="#131722">32.15</text>
<rect x="1781" y="407" width="62" height="21" rx="1" fill="#131722"/>
<path d="M1781 417.500h6" stroke="#fff" fill="none"/>
<text x="1793" y="422" font-size="12.500" font-weight="700" fill="#fff">11.939M</text>

<!-- pane buttons -->
<rect class="btn" x="1671.500" y="355.500" width="22" height="22" rx="4"/>
<rect class="btn" x="1698.500" y="355.500" width="22" height="22" rx="4"/>
<rect class="btn" x="1726.500" y="355.500" width="22" height="22" rx="4"/>
<rect class="btn" x="1753.500" y="355.500" width="22" height="22" rx="4"/>
<path class="ic" d="M1682.500 372V361.500M1678 366l4.500-4.500l4.500 4.500M1709.500 361V371.500M1705 367l4.500 4.500l4.500-4.500M1732.500 361.500l10 10M1742.500 361.500l-10 10M1758.500 364v-2a2.500 2.500 0 0 1 2.500-2.500h7a2.500 2.500 0 0 1 2.500 2.500v2M1758.500 369v2a2.500 2.500 0 0 0 2.500 2.500h7a2.500 2.500 0 0 0 2.500-2.500v-2"/>

<!-- time axis -->
<g>
<text x="42" y="823" class="tm">Tháng 6</text>
<text x="143.500" y="823" class="tm">Tháng 7</text>
<text x="239" y="823" class="tm">Tháng Tám</text>
<text x="345" y="823" class="tm">Tháng 9</text>
<text x="432.500" y="823" class="tm">Tháng 10</text>
<text x="533" y="823" class="tm">Tháng 11</text>
<text x="634" y="823" class="tm">Tháng Mười hai</text>
<text x="731.500" y="823" class="tm" font-weight="700">2024</text>
<text x="832" y="823" class="tm">Tháng Hai</text>
<text x="915" y="823" class="tm">5</text>
<text x="1003" y="823" class="tm">Tháng 4</text>
<text x="1103.500" y="823" class="tm">Tháng Năm</text>
<text x="1301" y="823" class="tm">Tháng 7</text>
<text x="1406" y="823" class="tm">Tháng Tám</text>
<text x="1507" y="823" class="tm">Tháng 9</text>
<text x="1604" y="823" class="tm">Tháng 10</text>
<text x="1710.500" y="823" class="tm">Tháng 11</text>
</g>
<rect x="1148" y="803" width="112.500" height="26" rx="1" fill="#131722"/>
<path d="M1204.500 803v6" stroke="#fff" fill="none"/>
<text x="1206" y="823" font-size="12.200" font-weight="700" fill="#fff" text-anchor="middle">31 Tháng Năm '24</text>
<circle class="ic" cx="1817" cy="818" r="5.500"/>
<path class="ic" d="M1817 810v2M1817 824v2M1809 818h2M1823 818h2M1811.300 812.300l1.500 1.500M1821.200 822.200l1.500 1.500M1811.300 823.700l1.500-1.500M1821.200 813.800l1.500-1.500"/>

<!-- bottom toolbar -->
<path d="M0 834.500H1853" stroke="#e0e3eb" stroke-width="1.500" fill="none"/>
<text x="25" y="861" class="tb" style="fill:#131722">1n</text>
<path d="M60.500 844V867M1703.500 844V867" stroke="#e0e3eb" fill="none"/>
<path class="ic" d="M82.500 846.500v4.500M93 846.500v4.500M78.500 853v-2a2 2 0 0 1 2-2h14a2 2 0 0 1 2 2v11a2 2 0 0 1-2 2h-8M78.500 853.500h18M78 859.500h9.500M84.500 856.500l3 3l-3 3"/>
<text x="1563" y="861" class="tb" style="fill:#131722">10:52:49 (UTC+7)</text>
<text x="1722" y="861" class="tb" style="fill:#131722">%</text>
<text x="1753" y="861" class="tb" style="fill:#131722">log</text>
<text x="1789" y="861" class="tb" style="fill:#3d8bf0">tự động</text>

<!-- left tab -->
<rect x="0" y="784" width="5" height="28" rx="1" fill="#fff" stroke="#e6e8ee"/>

<!-- OS strip -->
<rect x="0" y="877" width="275" height="6" fill="#f1f1f1"/>
<rect x="0" y="877" width="275" height="1" fill="#cfcfcf"/>
<circle cx="220" cy="882" r="3" fill="#f3b6e6"/><circle cx="259" cy="881" r="1.500" fill="#5cc3f0"/>
<rect x="275" y="877" width="1584" height="6" fill="#1f3540"/>
<rect x="425" y="877" width="47" height="6" fill="#4d626b"/>
</svg>
</body></html>
